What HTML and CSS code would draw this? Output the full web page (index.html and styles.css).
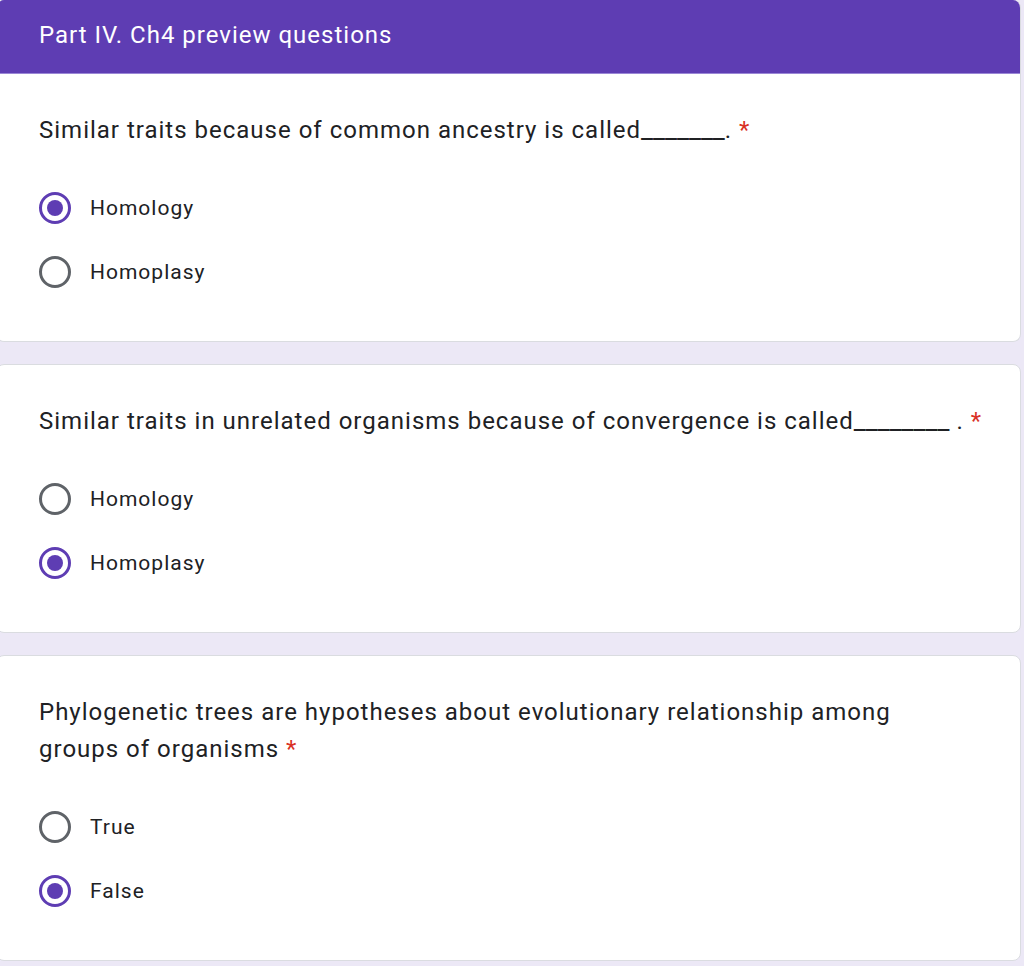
FILE: index.html
```html
<!DOCTYPE html>
<html>
<head>
<meta charset="utf-8">
<link rel="stylesheet" href="styles.css">
</head>
<body>
<div class="form">
  <section class="card">
    <header class="card-header">Part IV. Ch4 preview questions</header>
    <div class="card-body">
      <div class="question">Similar traits because of common ancestry is called<span class="blank">_______</span>. <span class="req">*</span></div>
      <div class="options">
        <div class="option"><span class="radio checked"></span><span class="label">Homology</span></div>
        <div class="option"><span class="radio"></span><span class="label">Homoplasy</span></div>
      </div>
    </div>
  </section>
  <section class="card">
    <div class="card-body">
      <div class="question">Similar traits in unrelated organisms because of convergence is called<span class="blank">________</span> . <span class="req">*</span></div>
      <div class="options">
        <div class="option"><span class="radio"></span><span class="label">Homology</span></div>
        <div class="option"><span class="radio checked"></span><span class="label">Homoplasy</span></div>
      </div>
    </div>
  </section>
  <section class="card">
    <div class="card-body">
      <div class="question">Phylogenetic trees are hypotheses about evolutionary relationship among<br>groups of organisms <span class="req">*</span></div>
      <div class="options">
        <div class="option"><span class="radio"></span><span class="label">True</span></div>
        <div class="option"><span class="radio checked"></span><span class="label">False</span></div>
      </div>
    </div>
  </section>
</div>
</body>
</html>
```

FILE: styles.css
```css
html, body {
  margin: 0;
  padding: 0;
  background: #ece8f6;
}
body {
  font-family: Roboto, "Liberation Sans", sans-serif;
  color: #202124;
}
.form {
  display: flex;
  flex-direction: column;
  gap: 22px;
  margin-left: -4px;
  width: 1025px;
  padding-bottom: 20px;
}
.card {
  background: #fff;
  border-radius: 8px;
  border: 1px solid #dadce0;
  border-top-width: 0;
  overflow: hidden;
}
.card + .card {
  border-top-width: 1px;
}
.card-header {
  background: #5e3db3;
  color: #fff;
  height: 74px;
  box-sizing: border-box;
  padding: 19px 0 0 42px;
  font-size: 24px;
  line-height: 32px;
  letter-spacing: 1px;
  border-bottom: 1px solid #9a87d6;
}
.card-body {
  padding: 38px 0 37px 42px;
}
.question {
  font-size: 24px;
  line-height: 37px;
  letter-spacing: 1px;
  margin-bottom: 27px;
}
.blank {
  font-size: 26.5px;
  line-height: 0;
  letter-spacing: 0;
}
.req {
  color: #d93025;
  letter-spacing: 0;
}
.option {
  display: flex;
  align-items: center;
  height: 64px;
}
.radio {
  width: 32px;
  height: 32px;
  box-sizing: border-box;
  border: 3px solid #5f6368;
  border-radius: 50%;
  position: relative;
  flex: none;
}
.radio.checked {
  border-color: #5e3db3;
}
.radio.checked::after {
  content: "";
  position: absolute;
  left: 5px;
  top: 5px;
  width: 16px;
  height: 16px;
  border-radius: 50%;
  background: #5e3db3;
}
.label {
  margin-left: 19px;
  font-size: 21px;
  letter-spacing: 1px;
}
```
